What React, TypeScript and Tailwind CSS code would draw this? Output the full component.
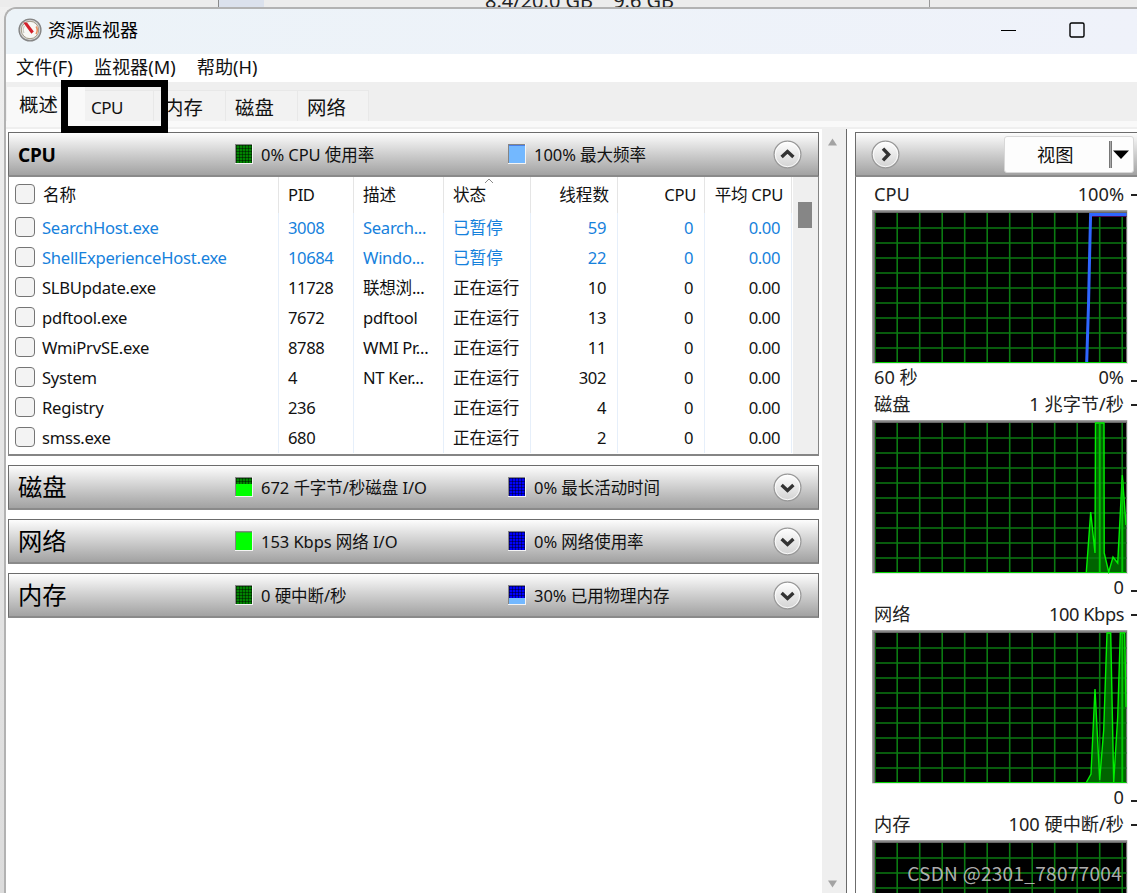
import React from "react";

interface Process {
  name: string;
  pid: string;
  desc: string;
  status: string;
  threads: string;
  suspended?: boolean;
}

const processes: Process[] = [
  { name: "SearchHost.exe", pid: "3008", desc: "Search...", status: "已暂停", threads: "59", suspended: true },
  { name: "ShellExperienceHost.exe", pid: "10684", desc: "Windo...", status: "已暂停", threads: "22", suspended: true },
  { name: "SLBUpdate.exe", pid: "11728", desc: "联想浏...", status: "正在运行", threads: "10" },
  { name: "pdftool.exe", pid: "7672", desc: "pdftool", status: "正在运行", threads: "13" },
  { name: "WmiPrvSE.exe", pid: "8788", desc: "WMI Pr...", status: "正在运行", threads: "11" },
  { name: "System", pid: "4", desc: "NT Ker...", status: "正在运行", threads: "302" },
  { name: "Registry", pid: "236", desc: "", status: "正在运行", threads: "4" },
  { name: "smss.exe", pid: "680", desc: "", status: "正在运行", threads: "2" },
];

const GREEN = "#00ff00";
const DARK_GREEN = "#008400";
const BLUE = "#0000ff";
const LIGHT_BLUE = "#73b8ff";

interface Meter {
  label: string;
  base: string;
  fill: string;
  // share of the swatch that is filled, from the bottom
  level: number;
}

const Swatch: React.FC<{ meter: Meter }> = ({ meter }) => {
  const full = meter.level === 1;
  const h = Math.round(17 * meter.level);
  return (
    <svg width="18" height="20" className="shrink-0">
      <rect width="18" height="20" fill="#f4f4f4" />
      <rect width="17" height="19" fill="#858585" />
      <rect x="1" y="1" width="16" height="18" fill={meter.base} />
      {!full &&
        [1.5, 4.5, 7.5, 10.5, 13.5, 16.5].map((p) => (
          <path key={p} d={`M${p} 1V19M1 ${p}H17`} stroke="#000" strokeOpacity="0.42" />
        ))}
      <rect x="1" y={19 - h} width="16" height={h} fill={meter.fill} />
    </svg>
  );
};

const RoundButton: React.FC<{ dir: "up" | "down" | "right" }> = ({ dir }) => {
  const paths = {
    up: "M8.6 17 L14.5 11.6 L20.4 17",
    down: "M8.6 12 L14.5 17.4 L20.4 12",
    right: "M12 8.6 L17.6 14.5 L12 20.4",
  };
  return (
    <svg width="29" height="29" className="shrink-0">
      <defs>
        <linearGradient id={`btn-${dir}`} x1="0" y1="0" x2="0" y2="1">
          <stop offset="0" stopColor="#fff" />
          <stop offset="1" stopColor="#d2d2d2" />
        </linearGradient>
      </defs>
      <circle cx="14.5" cy="14.5" r="13.4" fill={`url(#btn-${dir})`} stroke="#979797" strokeWidth="1.2" />
      <circle cx="14.5" cy="14.5" r="12.2" fill="none" stroke="#fff" strokeOpacity="0.8" />
      <path d={paths[dir]} fill="none" stroke="#333" strokeWidth="3.4" />
    </svg>
  );
};

const SectionHeader: React.FC<{
  title: string;
  meters: Meter[];
  open?: boolean;
}> = ({ title, meters, open }) => (
  <div className="grid h-[45px] grid-cols-[226px_273px_1fr_45px] items-center border-x border-t-[1.5px] border-[#6c6c6c] border-b-2 border-b-[#8a8a8a] bg-linear-to-b from-[#fdfdfd] to-[#a2a2a2]">
    <span
      className={
        open
          ? "pt-[2px] pl-[9px] text-[19px] font-bold tracking-[-0.2px] text-black"
          : "pl-[9px] text-[24.3px] text-black"
      }
    >
      {title}
    </span>
    {meters.map((m) => (
      <div key={m.label} className="flex items-center gap-[8px]">
        <Swatch meter={m} />
        <span className="pt-[2px] text-[16.5px] tracking-[-0.05px] whitespace-nowrap">{m.label}</span>
      </div>
    ))}
    <RoundButton dir={open ? "up" : "down"} />
  </div>
);

const Checkbox = () => (
  <span className="mt-[-2px] ml-[6px] h-[20px] w-[20px] shrink-0 rounded-[4px] border-[1.5px] border-[#757575] bg-[#f3f3f3]" />
);

const columns = "grid grid-cols-[270px_75px_90px_87px_87px_87px_87px]";

const ProcessTable = () => (
  <div className="flex h-[279px] border-x border-b-2 border-[#858585] bg-white">
    <div className="text-[16.6px]">
      <div className={`${columns} h-[36px] leading-[36px] *:border-r *:border-[#e5e5e5]`}>
        <div className="flex items-center gap-[8px]">
          <Checkbox />
          名称
        </div>
        <div className="pl-[9px] tracking-[-0.4px]">PID</div>
        <div className="pl-[9px]">描述</div>
        <div className="relative pl-[9px]">
          状态
          <svg width="10" height="6" className="absolute top-px left-[40px]">
            <path d="M1 5L5 1L9 5" fill="none" stroke="#8a8a8a" />
          </svg>
        </div>
        <div className="pr-[8px] text-right">线程数</div>
        <div className="pr-[8px] text-right tracking-[-0.3px]">CPU</div>
        <div className="pr-[8px] text-right tracking-[-0.3px] whitespace-nowrap">平均 CPU</div>
      </div>
      {processes.map((p) => (
        <div
          key={p.pid}
          className={`${columns} h-[30px] leading-[30px] *:border-r *:border-[#e6effa] ${
            p.suspended ? "text-[#1681dc]" : "text-[#111]"
          }`}
        >
          <div className="flex items-center gap-[7px] tracking-[-0.25px]">
            <Checkbox />
            {p.name}
          </div>
          <div className="pl-[9px] tracking-[-0.4px]">{p.pid}</div>
          <div className="pl-[9px] tracking-[-0.3px]">{p.desc}</div>
          <div className="pl-[9px]">{p.status}</div>
          <div className="pr-[11px] text-right tracking-[-0.4px]">{p.threads}</div>
          <div className="pr-[11px] text-right tracking-[-0.4px]">0</div>
          <div className="pr-[11px] text-right tracking-[-0.4px]">0.00</div>
        </div>
      ))}
    </div>
    <div className="ml-px flex-1 bg-[#efefef] pt-[25px] pl-[5px]">
      <div className="h-[26px] w-[14px] bg-[#868686]" />
    </div>
  </div>
);

const gridX = Array.from({ length: 11 }, (_, i) => 25.2 + i * 22.5);
const gridY = Array.from({ length: 9 }, (_, i) => 18 + i * 15);

interface GraphProps {
  title: string;
  max: string;
  min?: string;
  minLabel?: string;
  area?: string;
  extra?: string;
  line?: string;
}

const Graph: React.FC<GraphProps> = ({ title, max, min, minLabel, area, extra, line }) => (
  <div className="h-[210px] shrink-0 text-[18.2px] text-[#222]">
    <div className="flex h-[30px] items-center pl-[18px]">
      <div className="flex w-[250px] justify-between">
        <span>{title}</span>
        <span className={max.endsWith("Kbps") ? "tracking-[-0.4px]" : ""}>{max}</span>
      </div>
      <div className="ml-[7px] h-[1.5px] flex-1 bg-[#222]" />
    </div>
    <svg width="256" height="154" className="ml-[16px] block">
      <rect width="256" height="154" fill="#e3e3e3" />
      <path d="M0 0H255V2H2V153H0Z" fill="#a0a0a0" />
      <path d="M1.5 1.5H255V3H3V153H1.5Z" fill="#696969" />
      <rect x="3" y="3" width="251.5" height="150" fill="#000" />
      {area && <path d={`${area}V153H214Z`} fill="#006400" />}
      {gridX.map((x) => (
        <path key={x} d={`M${x} 3V153`} stroke="#0b7a12" strokeWidth="1.6" />
      ))}
      {gridY.map((y) => (
        <path key={y} d={`M3 ${y}H254.5`} stroke="#0b7a12" strokeWidth="1.7" />
      ))}
      <path d="M3.5 3V153" stroke="#006400" />
      <path d="M3 152.5H254.5" stroke="#00d200" />
      {area && <path d={area} fill="none" stroke="#00f000" strokeWidth="1.4" />}
      {extra && <path d={extra} stroke="#00c800" strokeWidth="1.8" />}
      {line && (
        <>
          <path d="M220 6.5H254.5" stroke="#4b0a50" />
          <path d={line} fill="none" stroke="#2f66ff" strokeWidth="3" />
        </>
      )}
    </svg>
    <div className="flex h-[26px] items-center pl-[18px]">
      <div className="flex w-[250px] justify-between pt-px">
        <span>{minLabel}</span>
        <span>{min}</span>
      </div>
      <div className="mt-[8px] ml-[7px] h-[1.5px] flex-1 bg-[#222]" />
    </div>
  </div>
);

const TitleBar = () => (
  <div className="flex h-[45px] shrink-0 items-center bg-linear-to-r from-[#ecf3f8] to-[#eff2fa] pb-[3px] pl-[12px]">
    <svg width="24" height="24" viewBox="0 0 24 24">
      <circle cx="12" cy="12" r="10.9" fill="#d4d4d4" stroke="#858585" strokeWidth="1.4" />
      <circle cx="12" cy="12" r="8.7" fill="#f8f8f5" stroke="#a39c88" strokeWidth="1" />
      <path d="M18.2 8.5A7 7 0 0 1 18 16" fill="none" stroke="#e89060" strokeWidth="1.6" />
      <path d="M6 15A7 7 0 0 1 6.5 8" fill="none" stroke="#c9c9c2" strokeWidth="1.2" />
      <path d="M5.2 4.4L9 4.4L15.8 13.6L13.4 15.8Z" fill="#d3202b" />
    </svg>
    <span className="ml-[6px] flex-1 text-[18px] text-black">资源监视器</span>
    <svg width="16" height="16" className="mr-[53px]">
      <path d="M1 8.5H16" stroke="#000" />
    </svg>
    <svg width="16" height="16" className="mr-[52px]">
      <rect x="1" y="1" width="14" height="14" rx="1.5" fill="none" stroke="#000" strokeWidth="1.4" />
    </svg>
  </div>
);

const Tabs = () => (
  <div className="relative flex h-[47px] shrink-0 flex-col bg-[#efefef]">
    <div className="z-10 flex h-[39px] items-end pl-px text-[19.4px]">
      <div className="h-[34px] w-[78px] bg-[#f9f9f9] pl-[12px] leading-[35px]">概述</div>
      <div className="h-[31px] w-[69px] border-t border-r border-[#e8e8e8] bg-[#f2f2f2] pl-[6px] text-[17px] leading-[34px] tracking-[-0.5px]">
        CPU
      </div>
      <div className="h-[31px] w-[72px] border-t border-r border-[#e8e8e8] bg-[#f2f2f2] pl-[10px] leading-[33px]">
        内存
      </div>
      <div className="h-[31px] w-[72px] border-t border-r border-[#e8e8e8] bg-[#f2f2f2] pl-[9px] leading-[33px]">
        磁盘
      </div>
      <div className="h-[31px] w-[71px] border-t border-r border-[#e8e8e8] bg-[#f2f2f2] pl-[9px] leading-[33px]">
        网络
      </div>
    </div>
    <div className="h-[6px] bg-[#f9f9f9]" />
    {/* highlight box drawn over the CPU tab */}
    <div className="absolute top-[-2px] left-[55px] z-20 h-[53px] w-[107px] border-[7px] border-black" />
  </div>
);

const App = () => {
  return (
    <div className="relative flex h-[893px] w-[1137px] flex-col overflow-hidden bg-linear-to-b from-[#f0f0f0] to-[#dcdcdc] font-['Noto_Sans','Noto_Sans_CJK_SC',sans-serif] text-[#111]">
      {/* strip of the window behind */}
      <div className="flex h-[7px] shrink-0 overflow-hidden bg-[#ececec]">
        <div className="ml-[218px] w-[46px] border-l border-[#8a8a8a] bg-[#dbe1ec]" />
        <div className="flex w-[666px] gap-[20px] border-r border-[#999] pl-[221px] text-[20px] leading-[27px] whitespace-nowrap text-[#222]">
          <span className="mt-[-13px]">8.4/20.0 GB</span>
          <span className="mt-[-13px]">9.6 GB</span>
        </div>
      </div>

      <div className="ml-[4px] flex min-h-0 flex-1 flex-col overflow-hidden rounded-tl-[12px] border-t-2 border-l-2 border-[#b2b2b2] bg-white">
        <TitleBar />
        <div className="flex h-[28px] shrink-0 items-center gap-[21px] pl-[10px] text-[18.2px] text-[#111]">
          <span>文件(F)</span>
          <span>监视器(M)</span>
          <span>帮助(H)</span>
        </div>
        <Tabs />

        <div className="flex min-h-0 flex-1">
          <div className="flex w-[816px] flex-col gap-[9px] pt-[3px] pr-[3px] pl-[2px]">
            <div>
              <SectionHeader
                open
                title="CPU"
                meters={[
                  { label: "0% CPU 使用率", base: DARK_GREEN, fill: GREEN, level: 0 },
                  { label: "100% 最大频率", base: "#4a7fe8", fill: LIGHT_BLUE, level: 1 },
                ]}
              />
              <ProcessTable />
            </div>
            <SectionHeader
              title="磁盘"
              meters={[
                { label: "672 千字节/秒磁盘 I/O", base: DARK_GREEN, fill: GREEN, level: 0.72 },
                { label: "0% 最长活动时间", base: BLUE, fill: LIGHT_BLUE, level: 0 },
              ]}
            />
            <SectionHeader
              title="网络"
              meters={[
                { label: "153 Kbps 网络 I/O", base: "#30c030", fill: GREEN, level: 1 },
                { label: "0% 网络使用率", base: BLUE, fill: LIGHT_BLUE, level: 0 },
              ]}
            />
            <SectionHeader
              title="内存"
              meters={[
                { label: "0 硬中断/秒", base: DARK_GREEN, fill: GREEN, level: 0 },
                { label: "30% 已用物理内存", base: BLUE, fill: LIGHT_BLUE, level: 0.35 },
              ]}
            />
          </div>

          <div className="flex w-[24px] flex-col items-center justify-between bg-[#efefef] pt-[9px] pr-[3px] pb-[5px]">
            <svg width="9" height="8">
              <path d="M4.5 0.5L9 7.5H0Z" fill="#a3a3a3" />
            </svg>
            <svg width="9" height="8">
              <path d="M4.5 7.5L9 0.5H0Z" fill="#a3a3a3" />
            </svg>
          </div>

          <div className="flex min-w-0 flex-1 flex-col border-l-[1.5px] border-[#6a6a6a] pt-[3px] pl-[8px]">
            <div className="flex h-[45px] shrink-0 items-center border-t-[1.5px] border-l border-[#6c6c6c] border-b-2 border-b-[#8a8a8a] bg-linear-to-b from-[#fdfdfd] to-[#a2a2a2] pl-[15px]">
              <RoundButton dir="right" />
              <div className="ml-[104px] flex h-[37px] w-[130px] items-center rounded-[3px] border border-[#d8d8d8] bg-[#fdfdfd] text-[18.3px]">
                <span className="w-[104px] pt-px pl-[32px]">视图</span>
                <span className="h-[27px] w-[3px] border-x border-[#777] bg-[#aaa]" />
                <svg width="16" height="9" className="mt-px ml-px">
                  <path d="M0 0.5H16L8 9Z" fill="#000" />
                </svg>
              </div>
            </div>
            <div className="min-h-0 flex-1 overflow-hidden border-l border-[#6c6c6c] pt-[3px]">
              <Graph title="CPU" max="100%" minLabel="60 秒" min="0%" line="M214.7 152L216.5 95L217.5 50L218.6 4.5H254.5" />
              <Graph
                title="磁盘"
                max="1 兆字节/秒"
                min="0"
                area="M214.3 152.5L218.7 92L223 133L223.5 3H232L232.2 133L236.7 152L241 137L245.7 143L250.3 55L254 105"
                extra="M227.7 3V152M250.3 60V152"
              />
              <Graph
                title="网络"
                max="100 Kbps"
                min="0"
                area="M214.3 152.5L219 144L223 59L227.7 150L231.7 100L235 3H238.7L241.7 152L245.7 87L248.3 3H252.7L254 77"
                extra="M250.3 3V152"
              />
              <Graph title="内存" max="100 硬中断/秒" />
            </div>
          </div>
        </div>
      </div>

      <div className="absolute right-[15px] bottom-[6px] font-['Noto_Sans_CJK_SC',sans-serif] text-[19px] leading-[28px] tracking-[0.3px] whitespace-nowrap text-[#c4c4c4]/90">
        CSDN @2301_78077004
      </div>
    </div>
  );
};

export default App;
